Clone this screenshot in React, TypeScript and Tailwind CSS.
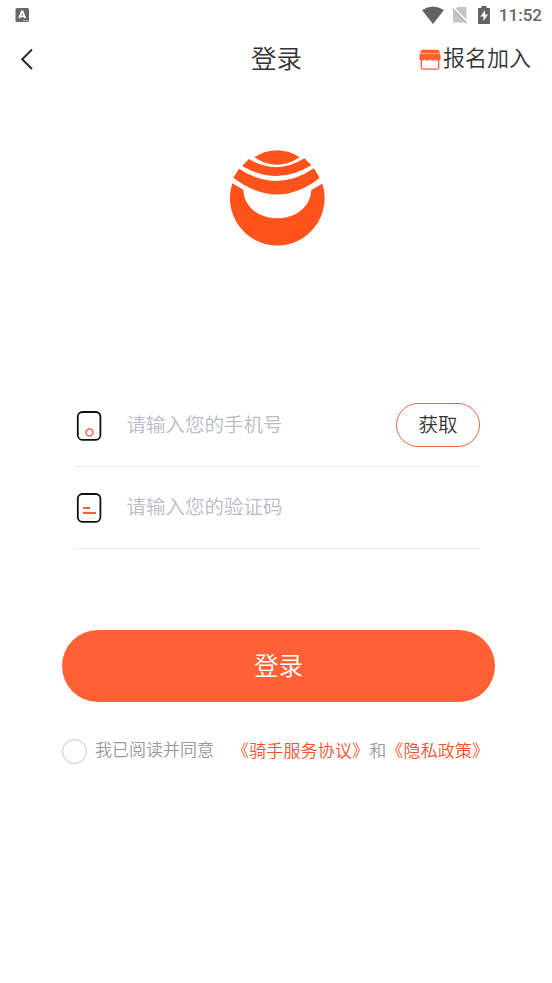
import type { ReactNode } from "react";

function StatusBar() {
  return (
    <div className="flex h-[30px] items-center justify-between pr-[10px] pl-[15px]">
      <svg className="size-[14px]" viewBox="0 0 14 14">
        <rect x="0.5" y="0" width="13.5" height="14" rx="1.5" fill="#676767" />
        <path d="M4.2 10.2 6.9 3.5h.6L10.2 10.2M5.3 8.3h3.6" fill="none" stroke="#fff" strokeWidth="1.8" />
        <path d="M8 12.6h5" stroke="#ccc" strokeWidth="0.8" />
      </svg>
      <div className="flex items-center">
        <svg className="h-[18px] w-[22px]" viewBox="0 0 22 18">
          <path d="M0 4.1Q11-3.3 22 4.1L11 18Z" fill="#636363" />
        </svg>
        <svg className="ml-2 h-[18px] w-[16px]" viewBox="0 0 16 18">
          <path d="M5.5 1H14.5V16.5H1V5.5Z" fill="#c4c4c4" />
          <path d="M1.5 1.500 16 16.500" stroke="#fff" strokeWidth="1.600" />
          <path d="M.5 2.500 14.800 17.300" stroke="#b5b5b5" strokeWidth="1.400" />
        </svg>
        <svg className="ml-[10px] h-[18px] w-3" viewBox="0 0 12 18">
          <path d="M3.5 0h5v2H11q1 0 1 1v14q0 1-1 1H1q-1 0-1-1V3q0-1 1-1h2.5Z" fill="#636363" />
          <path d="M7 4 2.5 10.500h3V15L10 8.500H7Z" fill="#fff" />
        </svg>
        <span className="ml-[9px] font-[Roboto] text-[17px] leading-[18px] font-medium text-[#666]">
          11:52
        </span>
      </div>
    </div>
  );
}

function StoreIcon() {
  return (
    <svg className="h-[21px] w-[22px]" viewBox="0 0 22 21" fill="#fd6035">
      <path d="M3.2.800h15.600q1.200 0 1.500 1L21 4.500H1l.7-2.700q.3-1 1.500-1Z" />
      <path d="M.700 5.100h20.600l.4 3.600q0 2.900-2.700 2.900-1.800 0-2.600-1.200-1 1.200-2.600 1.200T11 10.400q-1 1.200-2.700 1.200t-2.700-1.200q-.8 1.200-2.600 1.200Q.3 11.600.3 8.700Z" />
      <path d="M2.300 10.500v8q0 1.600 1.600 1.600h14.200q1.600 0 1.600-1.600v-8" fill="none" stroke="#fd6035" strokeWidth="1.300" />
    </svg>
  );
}

function Logo() {
  return (
    <svg className="size-[115px]" viewBox="0 0 345 345" fill="#ff531b">
      <path d="M103 52Q135 31 171 31T239 52Q171 97 103 52Z" />
      <path d="M87 57Q171 107 253 55L274 76Q172 139 66 78Z" />
      <path d="M57 86Q171 160 282 85L299 114Q172 213 40 113Z" />
      <path d="M37 130 70 149C72 202 118 235 172 235S271 202 274 150L307 131A142 142 0 1 1 37 130Z" />
    </svg>
  );
}

function PhoneIcon() {
  return (
    <svg className="h-[30px] w-[26px]" viewBox="0 0 26 30" fill="none">
      <rect x="1.8" y="1" width="22.6" height="27.8" rx="4.5" stroke="#111" strokeWidth="1.8" />
      <circle cx="13.5" cy="21.6" r="3.5" stroke="#f2694a" strokeWidth="1.5" />
    </svg>
  );
}

function CodeIcon() {
  return (
    <svg className="h-[30px] w-[26px]" viewBox="0 0 26 30" fill="none">
      <rect x="1.8" y="1" width="22.6" height="27.8" rx="4.5" stroke="#111" strokeWidth="1.8" />
      <path d="M7 15h7M7 20h13" stroke="#fd6035" strokeWidth="1.8" />
    </svg>
  );
}

function Field({ icon, placeholder, children }: { icon: ReactNode; placeholder: string; children?: ReactNode }) {
  return (
    <div className="flex h-[82px] items-center border-b border-[#ebebeb] pl-[2px]">
      {icon}
      <input
        className="ml-[24.5px] w-[250px] min-w-0 pb-[3px] text-[19.5px] outline-none placeholder:text-[#b9bcc6]"
        placeholder={placeholder}
      />
      {children}
    </div>
  );
}

export default function App() {
  return (
    <div className="min-h-screen bg-white font-['Noto_Sans_CJK_SC',sans-serif] font-[350] text-[#333]">
      <StatusBar />

      <header className="grid h-[58px] grid-cols-[1fr_auto_1fr] items-center pr-[21px] pl-[22px]">
        <svg className="-ml-[2px] h-[22px] w-[14px]" viewBox="0 0 14 22">
          <path d="M12 1.5 2.2 11.2 12 21" fill="none" stroke="#292929" strokeWidth="2" />
        </svg>
        <h1 className="pb-1 text-[25.5px] font-[350]">登录</h1>
        <div className="flex items-center justify-end gap-[2px]">
          <StoreIcon />
          <span className="-mt-1 pb-[3px] text-[22px] leading-8">报名加入</span>
        </div>
      </header>

      <div className="flex justify-center pt-[52px] pl-[3px]">
        <Logo />
      </div>

      <form className="mt-[130px] mr-[72px] ml-[74px]">
        <Field icon={<PhoneIcon />} placeholder="请输入您的手机号">
          <button
            type="button"
            className="mb-[2px] ml-auto h-11 w-[84px] shrink-0 rounded-full border border-[#ee6547] pb-px text-[19.5px]"
          >
            获取
          </button>
        </Field>
        <Field icon={<CodeIcon />} placeholder="请输入您的验证码" />
      </form>

      <button className="mt-[81px] ml-[62px] h-[72px] w-[433px] rounded-full bg-[#fd6135] pb-[2px] text-[24.5px] text-white">
        登录
      </button>

      <div className="mt-[34px] ml-[62px] flex items-center text-[17px] leading-[26px] whitespace-nowrap text-[#999]">
        <span className="size-[25px] shrink-0 rounded-full border border-[#c8c8c8]" />
        <span className="ml-2 pb-1">我已阅读并同意</span>
        <p className="ml-[18px] pb-[2px] tracking-[0.15px]">
          <a className="text-[#f4532f]">《骑手服务协议》</a>和<a className="text-[#f4532f]">《隐私政策》</a>
        </p>
      </div>
    </div>
  );
}
